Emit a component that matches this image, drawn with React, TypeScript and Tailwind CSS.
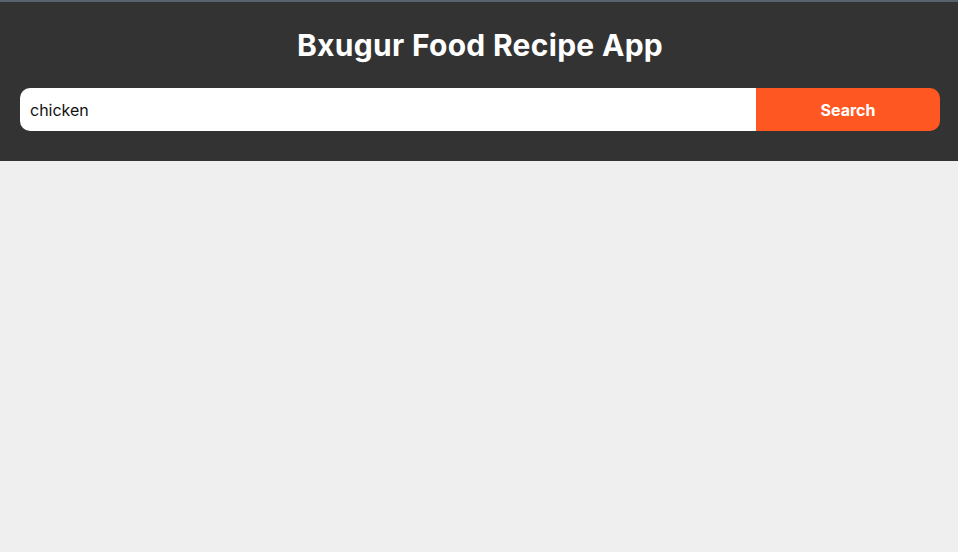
export default function App() {
  return (
    <div className="min-h-[552px] bg-[#efefef] font-['Inter','Liberation_Sans',sans-serif]">
      <div className="h-[2px] bg-[#56636e]" />
      <header className="bg-[#333333] pl-5 pr-[18px] pt-[25px] pb-[30px]">
        <h1 className="text-center text-[30px] font-bold leading-[36px] tracking-[0.3px] text-white">
          Bxugur Food Recipe App
        </h1>
        <div className="mt-[25px] flex h-[43px] overflow-hidden rounded-[10px]">
          <input
            defaultValue="chicken"
            className="min-w-0 flex-1 bg-white px-[10px] text-[16px] text-[#111] outline-none"
          />
          <button className="w-[184px] bg-[#ff5722] text-[16px] font-bold text-white">
            Search
          </button>
        </div>
      </header>
    </div>
  )
}
